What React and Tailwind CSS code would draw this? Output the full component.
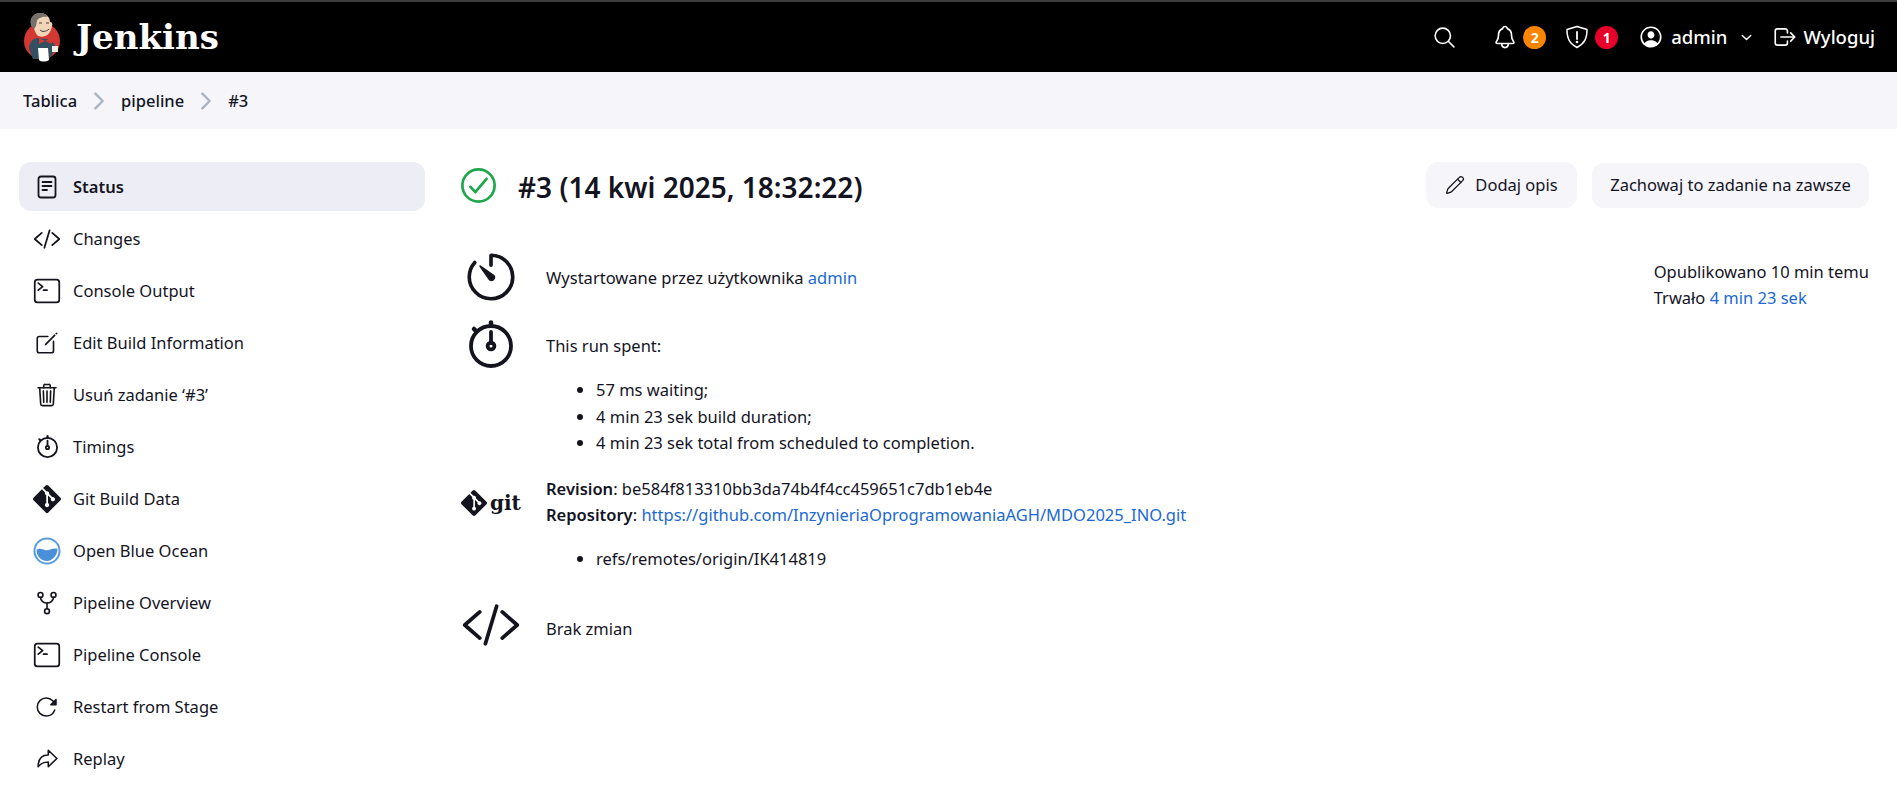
import React from 'react';
import {
  IoTerminalOutline, IoCodeSlashOutline, IoTrashOutline, IoTimerOutline, IoGitNetworkOutline,
  IoReloadOutline, IoArrowRedoOutline, IoCreateOutline, IoSearchOutline, IoNotificationsOutline,
  IoPersonCircleOutline, IoLogOutOutline, IoChevronDownOutline, IoCheckmarkCircleOutline,
  IoChevronForwardOutline,
} from 'react-icons/io5';
import { Pencil } from 'lucide-react';
import { SiGit } from 'react-icons/si';

const Stopwatch = ({ size = 24 }) => (
  <svg width={size} height={size} viewBox="0 0 48 48" fill="none" stroke="currentColor" strokeWidth="3.8" strokeLinecap="round">
    <circle cx="24" cy="26" r="20" />
    <path d="M24 2.5v3M7 9l2.5 2.5" strokeWidth="4.5" />
    <path d="M24 12v11" />
    <circle cx="24" cy="26" r="3.4" />
  </svg>
);

const StatusIcon = () => (
  <svg width="24" height="24" viewBox="0 0 24 24" fill="none" stroke="currentColor" strokeWidth="1.8" strokeLinecap="round">
    <rect x="3.5" y="1.5" width="17" height="21" rx="2.5" />
    <path d="M7.5 7h9M7.5 11h9M7.5 15h4.5" />
  </svg>
);

const BlueOcean = () => (
  <svg width="28" height="28" viewBox="0 0 28 28">
    <circle cx="14" cy="14" r="12.5" fill="#fff" stroke="#5b9bdc" strokeWidth="2" />
    <path d="M3.5 13c3-2.6 6-0.6 9 .2s6-2.6 12-1.6c0 7-5 12.4-10.500 12.400S3.500 19.500 3.500 13z" fill="#4a90d9" />
  </svg>
);

const JenkinsLogo = () => (
  <svg width="38" height="50" viewBox="0 0 38 50">
    <circle cx="18" cy="29" r="18" fill="#d33833" />
    <path d="M5 37c0-6 3-10 8-11l9 1c6 1 9 4 10 10l-3 4-4 6H9z" fill="#335061" />
    <path d="M7 12C6 5 11 1 16 1c6 0 10 4 10 9 2 0 3 2 2 4-1 5-3 9-7 10-2 1-6 1-8-1-2-3-3-6-3-8-2 0-3-2-3-3z" fill="#f0d6b7" />
    <path d="M7 13C5 6 10 1 16 1c4 0 7 2 8 4-5-1-10 1-11 4l-1 5-2 3z" fill="#77716b" />
    <path d="M15 11h3M22 11h3M16 18c2 2 6 2 9-1" stroke="#49343c" strokeWidth="1" fill="none" />
    <path d="M21 29l-6-3v6zM21 29l7-3v6z" fill="#d33833" />
    <path d="M14 36h10l1 12c-3 2-8 2-10 0z" fill="#fff" />
    <path d="M28 34h6v6h-6z" fill="#f5f0e6" />
  </svg>
);

const ShieldAlert = () => (
  <svg width="24" height="24" viewBox="0 0 24 24" fill="none" stroke="currentColor" strokeWidth="1.500" strokeLinecap="round" strokeLinejoin="round">
    <path d="M12 1.500l10 3c0 9-2.500 14-10 18-7.500-4-10-9-10-18z" />
    <path d="M12 7v7" strokeWidth="1.800" />
    <circle cx="12" cy="17" r=".6" fill="currentColor" />
  </svg>
);

const menuItems = [
  { label: 'Status', icon: <StatusIcon />, active: true },
  { label: 'Changes', icon: <IoCodeSlashOutline size={28} /> },
  { label: 'Console Output', icon: <IoTerminalOutline size={28} /> },
  { label: 'Edit Build Information', icon: <IoCreateOutline size={26} /> },
  { label: 'Usuń zadanie ‘#3’', icon: <IoTrashOutline size={26} /> },
  { label: 'Timings', icon: <Stopwatch size={23} /> },
  { label: 'Git Build Data', icon: <SiGit size={28} /> },
  { label: 'Open Blue Ocean', icon: <BlueOcean /> },
  { label: 'Pipeline Overview', icon: <IoGitNetworkOutline size={26} /> },
  { label: 'Pipeline Console', icon: <IoTerminalOutline size={28} /> },
  { label: 'Restart from Stage', icon: <IoReloadOutline size={24} /> },
  { label: 'Replay', icon: <IoArrowRedoOutline size={25} /> },
];

const linkClass = 'text-[#2069d1]';

const Badge = ({ color, children }) => (
  <span className={`flex h-[23px] w-[23px] items-center justify-center rounded-full text-[14px] font-bold text-white ${color}`}>
    {children}
  </span>
);

const App = () => {
  return (
    <div className="h-[797px] overflow-hidden bg-white font-['Noto_Sans',sans-serif] text-[16.5px] text-[#14141f]">
      {/* top bar */}
      <header className="flex h-[72px] items-center justify-between border-t-2 border-[#3d3d3d] bg-black pl-[24px] pr-[22px] text-white">
        <div className="flex items-center gap-[14px]">
          <JenkinsLogo />
          <span className="font-['DejaVu_Serif',serif] text-[34px] font-bold">Jenkins</span>
        </div>
        <div className="flex items-center text-[18.5px] font-medium">
          <IoSearchOutline size={25} className="mr-[35px]" />
          <IoNotificationsOutline size={26} className="mr-[5px]" />
          <Badge color="bg-[#fb8500]">2</Badge>
          <span className="ml-[19px] mr-[6px]"><ShieldAlert /></span>
          <Badge color="bg-[#e6002a]">1</Badge>
          <IoPersonCircleOutline size={26} className="ml-[20px] mr-[7px]" />
          <span>admin</span>
          <IoChevronDownOutline size={15} className="ml-[12px] mr-[18px]" />
          <IoLogOutOutline size={26} className="mr-[5px]" />
          <span>Wyloguj</span>
        </div>
      </header>

      {/* breadcrumb */}
      <nav className="flex h-[57px] items-center bg-[#f5f5fa] pl-[23px] font-medium">
        <span className="pt-[2px]">Tablica</span>
        <IoChevronForwardOutline size={26} className="ml-[9px] mr-[9px] text-[#a9b4c2]" />
        <span className="pt-[2px]">pipeline</span>
        <IoChevronForwardOutline size={26} className="ml-[9px] mr-[9px] text-[#a9b4c2]" />
        <span className="pt-[2px]">#3</span>
      </nav>

      <div className="flex pt-[33px]">
        {/* side menu */}
        <aside className="ml-[19px] w-[406px] shrink-0">
          {menuItems.map((item) => (
            <div
              key={item.label}
              className={`mb-[3px] flex h-[49px] items-center rounded-[12px] ${item.active ? 'bg-[#ecedf5] font-semibold' : ''}`}
            >
              <span className="flex w-[54px] shrink-0 justify-center pl-[2px] text-[#14141f]">{item.icon}</span>
              <span className="pt-[2px]">{item.label}</span>
            </div>
          ))}
        </aside>

        {/* main */}
        <main className="ml-[36px] mr-[28px] flex-1">
          <div className="flex h-[46px] items-center justify-between">
            <div className="flex items-center">
              <IoCheckmarkCircleOutline size={43} className="ml-[-4px] text-[#1ea64b]" />
              <h1 className="ml-[18px] pt-[3px] text-[28px] font-semibold">#3 (14 kwi 2025, 18:32:22)</h1>
            </div>
            <div className="flex items-center gap-[15px]">
              <button className="flex h-[46px] w-[151px] items-center justify-center gap-[10px] rounded-[12px] bg-[#f5f5fa]">
                <Pencil size={20} strokeWidth={1.5} />
                Dodaj opis
              </button>
              <button className="flex h-[45px] w-[277px] items-center justify-center rounded-[12px] bg-[#f5f5fa]">
                Zachowaj to zadanie na zawsze
              </button>
            </div>
          </div>

          <div className="flex justify-between">
            <div>
              <div className="mt-[40px] flex items-center">
                <IoTimerOutline size={58} className="ml-[1px]" />
                <span className="ml-[26px] mt-[2px]">Wystartowane przez użytkownika <a className={linkClass}>admin</a></span>
              </div>
              <div className="mt-[14px] flex items-center">
                <span className="ml-[6px]"><Stopwatch size={48} /></span>
                <span className="ml-[31px] mt-[4px]">This run spent:</span>
              </div>
              <ul className="ml-[85px] mt-[9px] list-disc pl-[50px] leading-[26.6px]">
                <li>57 ms waiting;</li>
                <li>4 min 23 sek build duration;</li>
                <li>4 min 23 sek total from scheduled to completion.</li>
              </ul>
              <div className="mt-[19px] flex">
                <div className="flex w-[85px] shrink-0 items-center pt-[2px]">
                  <SiGit size={26} />
                  <span className="ml-[3px] font-['DejaVu_Serif',serif] text-[20px] font-bold leading-none">git</span>
                </div>
                <div className="leading-[26.6px]">
                  <div><b className="font-semibold">Revision</b>: be584f813310bb3da74b4f4cc459651c7db1eb4e</div>
                  <div><b className="font-semibold">Repository</b>: <a className={linkClass}>https://github.com/InzynieriaOprogramowaniaAGH/MDO2025_INO.git</a></div>
                </div>
              </div>
              <ul className="ml-[85px] mt-[17px] list-disc pl-[50px] leading-[26.6px]">
                <li>refs/remotes/origin/IK414819</li>
              </ul>
              <div className="mt-[22px] flex items-center">
                <IoCodeSlashOutline size={60} />
                <span className="ml-[25px] mt-[10px]">Brak zmian</span>
              </div>
            </div>
            <div className="mt-[51px] leading-[26px]">
              <div>Opublikowano 10 min temu</div>
              <div>Trwało <a className={linkClass}>4 min 23 sek</a></div>
            </div>
          </div>
        </main>
      </div>
    </div>
  );
};

export default App;
